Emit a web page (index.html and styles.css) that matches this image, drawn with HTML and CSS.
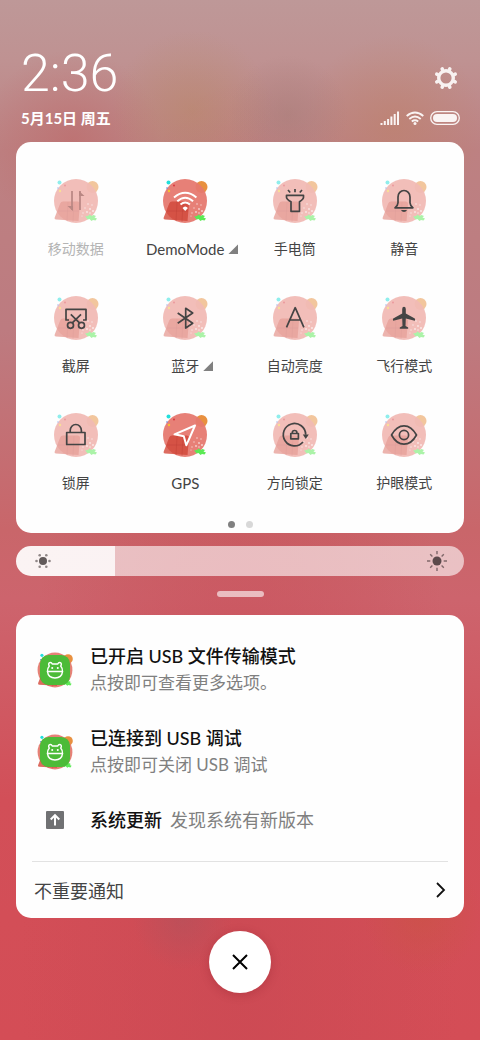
FILE: index.html
```html
<!DOCTYPE html>
<html lang="zh-CN">
<head>
    <meta charset="UTF-8">
    <meta name="viewport" content="width=device-width, initial-scale=1.0">
    <title>控制中心</title>
    <link rel="stylesheet" href="styles.css">
</head>
<body>
    <!-- shared shapes -->
    <svg class="defs" aria-hidden="true">
        <clipPath id="disc"><circle cx="24" cy="24" r="22"/></clipPath>
        <symbol id="blob" viewBox="0 0 48 48">
            <circle cx="40.500" cy="10" r="6" fill="#e8903f"/>
            <path d="M11 24.500h14.500q2.500 0 2.500 2.500l-1.500 17L4 42.500q-2 0-1.300-2l5.500-14q.8-2 2.800-2z" fill="#dc6c60"/>
            <circle cx="24" cy="24" r="22" fill="#e5786f" fill-opacity=".94"/>
            <g clip-path="url(#disc)">
                <path d="M11 24.500h14.500q2.500 0 2.500 2.500l-1.500 17L4 42.500q-2 0-1.300-2l5.500-14q.8-2 2.800-2z" fill="#d24b3e" fill-opacity=".85"/>
                <path d="M16 25l-1 20M22 25l-1 20M6 34h21" stroke="#b93d33" stroke-width=".7" stroke-opacity=".5" fill="none"/>
            </g>
            <circle cx="7.500" cy="5.500" r="2" fill="#22dfdb"/>
            <circle cx="6" cy="11" r=".8" fill="#5a7fe0"/>
            <circle cx="8" cy="14" r="1.200" fill="#f5c22f"/>
            <circle cx="13" cy="8.500" r=".9" fill="#d8303a"/>
            <g fill="#fff" fill-opacity=".65">
                <circle cx="36" cy="27" r=".8"/><circle cx="40" cy="28" r=".7"/><circle cx="33" cy="31" r=".7"/>
                <circle cx="38" cy="32" r=".9"/><circle cx="35" cy="35" r=".9"/><circle cx="31" cy="36" r=".7"/>
                <circle cx="41" cy="34" r="1"/><circle cx="38" cy="36" r=".8"/><circle cx="30" cy="39" r=".6"/>
            </g>
            <path d="M33 39.500l3-.5 1.500-1.500 2 1.500 2-1 2.500 1-1.500 1.500 2.500 1-1.500 2-2.500-.5-1.500 1-2-2-2 .5-1-1.500z" fill="#5bea55"/>
        </symbol>
        <symbol id="usb" viewBox="0 0 48 48">
            <use href="#blob"/>
            <rect x="5" y="5" width="38" height="38" rx="11" fill="#4cbb38"/>
            <g fill="none" stroke="#fff" stroke-width="1.800" stroke-linejoin="round" stroke-linecap="round">
                <path d="M14.500 26q0-4.500 2.300-7-1.800-3.200.4-4.200 2.300-.8 3.300 1.700h7q1-2.500 3.300-1.700 2.200 1 .4 4.200 2.300 2.500 2.300 7z"/>
                <path d="M14.500 26q1 8 9.500 8t9.500-8"/>
            </g>
            <circle cx="20.500" cy="21.500" r="1.300" fill="#fff"/>
            <circle cx="27.500" cy="21.500" r="1.300" fill="#fff"/>
        </symbol>
    </svg>

    <header class="status">
        <time class="clock">2:36</time>
        <button class="settings" type="button" aria-label="设置">
            <svg width="24" height="24" viewBox="0 0 24 24" fill="none" stroke="#f8f2f1">
                <circle cx="12" cy="12" r="7.300" stroke-width="3.400"/>
                <path d="M15.400 3.800l.4-1M20.200 8.600l1-.4M20.200 15.400l1 .4M15.400 20.200l.4 1M8.600 20.200l-.4 1M3.800 15.400l-1 .4M3.800 8.600l-1-.4M8.600 3.800l-.4-1" stroke-width="3.600" stroke-linecap="round"/>
            </svg>
        </button>
        <div class="date">5月15日 周五</div>
        <div class="indicators">
            <svg width="20" height="14" viewBox="0 0 20 14" fill="none" stroke="#faf4f3" stroke-width="2">
                <path d="M1.500 14v-2M4.800 14v-4M8.100 14V8M11.400 14V5.500M14.700 14V3M18 14V.5"/>
            </svg>
            <svg width="18" height="14" viewBox="0 0 18 14" fill="none" stroke="#faf4f3" stroke-width="1.900">
                <path d="M.7 5q8.300-7 16.600 0M3.300 8Q9 3.200 14.700 8M5.800 10.500q3.200-2.500 6.400 0"/>
                <circle cx="9" cy="12.400" r="1.500" fill="#faf4f3" stroke="none"/>
            </svg>
            <svg width="30" height="14" viewBox="0 0 30 14">
                <rect x=".7" y=".7" width="28.600" height="12.600" rx="6.300" fill="none" stroke="#faf4f3" stroke-width="1.300"/>
                <rect x="3" y="3" width="24" height="8" rx="4" fill="#faf4f3"/>
            </svg>
        </div>
    </header>

    <main>
        <section class="card toggles">
            <div class="grid">
                <button class="tile disabled" type="button">
                    <svg class="icon" viewBox="0 0 48 48">
                        <use class="blob" href="#blob"/>
                        <path class="line" d="M20 14v19M28 33V14"/>
                        <path class="solid" d="M15.500 29H21v5zM32.500 19H27v-5z"/>
                    </svg>
                    <span class="label">移动数据</span>
                </button>
                <button class="tile on" type="button">
                    <svg class="icon" viewBox="0 0 48 48">
                        <use class="blob" href="#blob"/>
                        <path class="line" d="M13 20.500q11.200-9.500 22.400 0M16.300 24.200q7.900-7 15.800 0M19.500 27.500q4.700-4 9.400 0"/>
                        <path class="solid" d="M21.500 31q2.700-3 5.400 0l-2.700 3z"/>
                    </svg>
                    <span class="label latin">DemoMode<i class="more"></i></span>
                </button>
                <button class="tile" type="button">
                    <svg class="icon" viewBox="0 0 48 48">
                        <use class="blob" href="#blob"/>
                        <path class="line" d="M15.500 18.300h17v2q0 2-4 4.500v9.500h-8.500v-9.500q-4.500-2.500-4.500-4.500zM24 12v3.300M17 13l2.200 2.500M31 13l-2.200 2.500"/>
                    </svg>
                    <span class="label">手电筒</span>
                </button>
                <button class="tile" type="button">
                    <svg class="icon" viewBox="0 0 48 48">
                        <use class="blob" href="#blob"/>
                        <path class="line" d="M15 30.800q3-2.500 3-5V20a6 6.500 0 0 1 12 0v5.800q0 2.500 3 5z"/>
                        <path class="solid" d="M21 33h6q-1 2-3 2t-3-2z"/>
                    </svg>
                    <span class="label">静音</span>
                </button>

                <button class="tile" type="button">
                    <svg class="icon" viewBox="0 0 48 48">
                        <use class="blob" href="#blob"/>
                        <path class="line" d="M17 26h-3V15.300h20V26h-3M20.300 28.800l8.700-8.500M27.500 28.800l-8.700-8.500"/>
                        <circle class="line" cx="18.500" cy="31.300" r="3"/>
                        <circle class="line" cx="29.500" cy="31.300" r="3"/>
                    </svg>
                    <span class="label">截屏</span>
                </button>
                <button class="tile" type="button">
                    <svg class="icon" viewBox="0 0 48 48">
                        <use class="blob" href="#blob"/>
                        <path class="line" d="M16.700 19l15 10.300-7 4.700V14.300l7 4.700-15 10.300"/>
                    </svg>
                    <span class="label">蓝牙<i class="more"></i></span>
                </button>
                <button class="tile" type="button">
                    <svg class="icon" viewBox="0 0 48 48">
                        <use class="blob" href="#blob"/>
                        <path class="line" d="M15.500 33.300l8.700-19.600 8.700 19.600M18.700 26h11"/>
                    </svg>
                    <span class="label">自动亮度</span>
                </button>
                <button class="tile" type="button">
                    <svg class="icon" viewBox="0 0 48 48">
                        <use class="blob" href="#blob"/>
                        <path class="solid" d="M24 12.700q1.700 0 1.800 2.300v4.500l9 5q.7.800 0 2.300l-9-2.300-.3 7.500 2.700 1.500v1.300h-8.400v-1.300l2.700-1.500-.3-7.500-9 2.300q-.7-1.500 0-2.300l9-5V15q.1-2.300 1.800-2.300z"/>
                    </svg>
                    <span class="label">飞行模式</span>
                </button>

                <button class="tile" type="button">
                    <svg class="icon" viewBox="0 0 48 48">
                        <use class="blob" href="#blob"/>
                        <path class="line" d="M14.700 21.500H33v12H14.700zM18.200 21.500v-2a5.600 6 0 0 1 11.200 0v2"/>
                    </svg>
                    <span class="label">锁屏</span>
                </button>
                <button class="tile on" type="button">
                    <svg class="icon" viewBox="0 0 48 48">
                        <use class="blob" href="#blob"/>
                        <path class="line" d="M34 14.500l-20.500 8.800 9.300 2 2.500 9z"/>
                    </svg>
                    <span class="label latin">GPS</span>
                </button>
                <button class="tile" type="button">
                    <svg class="icon" viewBox="0 0 48 48">
                        <use class="blob" href="#blob"/>
                        <path class="line" d="M32 31a11.200 11.200 0 1 1 2.700-7.200"/>
                        <path class="solid" d="M31.800 23.500h6l-3 4.500z"/>
                        <path class="line" d="M19.800 22.500h7.600v5.300h-7.600zM21.300 22.500v-.7a2.300 2.300 0 0 1 4.600 0v.7"/>
                    </svg>
                    <span class="label">方向锁定</span>
                </button>
                <button class="tile" type="button">
                    <svg class="icon" viewBox="0 0 48 48">
                        <use class="blob" href="#blob"/>
                        <path class="line" d="M11.500 24q5-9.200 12.500-9.200T36.500 24q-5 9.200-12.500 9.200T11.500 24z"/>
                        <circle class="line" cx="24" cy="24" r="4.600"/>
                    </svg>
                    <span class="label">护眼模式</span>
                </button>
            </div>
            <div class="pages"><i class="dot active"></i><i class="dot"></i></div>
        </section>

        <div class="brightness">
            <input type="range" min="0" max="100" value="22" aria-label="亮度">
            <svg class="sun low" width="22" height="22" viewBox="0 0 22 22" fill="#625a5a">
                <circle cx="11" cy="11" r="4"/>
                <g fill-opacity=".7">
                    <circle cx="4.500" cy="11" r="1.300"/><circle cx="17.500" cy="11" r="1.300"/>
                    <circle cx="7.700" cy="5.300" r="1.300"/><circle cx="14.300" cy="5.300" r="1.300"/>
                    <circle cx="7.700" cy="16.700" r="1.300"/><circle cx="14.300" cy="16.700" r="1.300"/>
                </g>
            </svg>
            <svg class="sun high" width="22" height="22" viewBox="0 0 22 22" fill="#5c4a4c">
                <circle cx="11" cy="11" r="4.500"/>
                <path d="M11 1v3.300M11 17.700V21M1 11h3.300M17.700 11H21M4.200 4.200l2.200 2.200M15.600 15.600l2.200 2.200M4.200 17.800l2.200-2.200M15.600 6.400l2.200-2.200" stroke="#5c4a4c" stroke-opacity=".75" stroke-width="1.400"/>
            </svg>
        </div>

        <button class="handle" type="button" aria-label="展开"></button>

        <section class="card notices">
            <article class="notice">
                <svg class="app" viewBox="0 0 48 48"><use href="#usb"/></svg>
                <div>
                    <h2>已开启 USB 文件传输模式</h2>
                    <p>点按即可查看更多选项。</p>
                </div>
            </article>
            <article class="notice">
                <svg class="app" viewBox="0 0 48 48"><use href="#usb"/></svg>
                <div>
                    <h2>已连接到 USB 调试</h2>
                    <p>点按即可关闭 USB 调试</p>
                </div>
            </article>
            <article class="notice compact">
                <svg class="update" width="18" height="18" viewBox="0 0 18 18">
                    <rect width="18" height="18" rx="1" fill="#707173"/>
                    <path d="M9 14.500V4.500M4.700 8.500L9 4.200l4.300 4.300" fill="none" stroke="#fff" stroke-width="2"/>
                </svg>
                <h2>系统更新</h2>
                <p>发现系统有新版本</p>
            </article>
            <button class="unimportant" type="button">
                <span>不重要通知</span>
                <svg width="10" height="16" viewBox="0 0 10 16" fill="none" stroke="#111" stroke-width="1.800">
                    <path d="M1 1l7 7-7 7"/>
                </svg>
            </button>
        </section>

        <button class="close" type="button" aria-label="清除">
            <svg width="16" height="16" viewBox="0 0 16 16" fill="none" stroke="#000" stroke-width="2">
                <path d="M1 1l14 14M15 1L1 15"/>
            </svg>
        </button>
    </main>
</body>
</html>
```
FILE: styles.css
```css
* {
    box-sizing: border-box;
}

body {
    margin: 0;
    padding: 44px 16px 24px;
    min-height: 100vh;
    font-family: Lato, "Noto Sans CJK SC", sans-serif;
    color: #444;
    background:
        radial-gradient(circle at 40% 110px, rgba(184, 136, 96, 0.45), transparent 80px),
        radial-gradient(circle at 60% 115px, rgba(165, 125, 120, 0.5), transparent 60px),
        radial-gradient(circle at 82% 125px, rgba(190, 128, 100, 0.5), transparent 90px),
        radial-gradient(circle at 15% 140px, rgba(190, 100, 100, 0.5), transparent 90px),
        radial-gradient(circle at 38% 920px, rgba(165, 85, 95, 0.4), transparent 50px),
        radial-gradient(circle at 88% 915px, rgba(200, 85, 65, 0.5), transparent 60px),
        radial-gradient(ellipse at 50% 940px, rgba(200, 72, 82, 0.6), transparent 220px),
        linear-gradient(#be9898 0, #bf9292 60px, #bd8182 150px, #bd7b80 330px, #c9666a 530px, #cd646d 600px, #d24f58 800px, #d44d56 1040px);
}

button {
    padding: 0;
    border: 0;
    background: none;
    font: inherit;
    color: inherit;
    cursor: pointer;
}

svg {
    display: block;
}

.defs {
    position: absolute;
    width: 0;
    height: 0;
}

/* status bar */

.status {
    display: grid;
    grid-template-columns: 1fr auto;
    align-items: center;
    row-gap: 2px;
    padding: 0 4px 12px 5px;
    color: #fff;
}

.clock {
    font-family: Roboto, sans-serif;
    font-size: 52px;
    font-weight: 300;
    line-height: 60px;
}

.settings {
    justify-self: end;
    margin: 8px 2px 0 0;
}

.date {
    font-size: 15px;
    font-weight: 700;
    line-height: 24px;
}

.indicators {
    display: flex;
    gap: 6px;
}

/* quick toggles */

.card {
    background: #fefefe;
    border-radius: 15px;
}

.toggles {
    padding: 35px 5px 5px;
}

.grid {
    display: grid;
    grid-template-columns: repeat(4, 1fr);
    row-gap: 33px;
}

.tile {
    display: flex;
    flex-direction: column;
    align-items: center;
    gap: 12px;
}

.icon {
    width: 48px;
    height: 48px;
    color: #444;
}

.blob {
    opacity: 0.5;
}

.line {
    fill: none;
    stroke: currentColor;
    stroke-width: 1.7;
    stroke-linejoin: round;
}

.solid {
    fill: currentColor;
}

.on .icon {
    color: #fff;
}

.on .blob {
    opacity: 1;
}

.on .line {
    stroke-width: 2;
}

.disabled .icon {
    color: #b98783;
}

.label {
    display: flex;
    align-items: center;
    font-size: 14px;
    line-height: 24px;
    white-space: nowrap;
}

.latin {
    font-size: 15px;
}

.disabled .label {
    color: #b4b4b4;
}

/* hangs outside so the label text stays centred */
.more {
    width: 10px;
    height: 10px;
    margin: 0 -14px 0 4px;
    background: #808080;
    clip-path: polygon(100% 0, 100% 100%, 0 100%);
}

.pages {
    display: flex;
    justify-content: center;
    gap: 11px;
    margin-top: 26px;
}

.dot {
    width: 7px;
    height: 7px;
    border-radius: 50%;
    background: #d8d8d8;
}

.dot.active {
    background: #808080;
}

/* brightness */

.brightness {
    position: relative;
    margin-top: 13px;
}

.brightness input {
    display: block;
    appearance: none;
    width: 100%;
    height: 30px;
    margin: 0;
    border-radius: 15px;
    background: linear-gradient(to right, rgba(255, 255, 255, 0.92) 22%, rgba(255, 255, 255, 0.6) 22%);
}

.brightness input::-webkit-slider-thumb {
    appearance: none;
    width: 1px;
    height: 30px;
}

.sun {
    position: absolute;
    top: 4px;
    pointer-events: none;
}

.low {
    left: 16px;
}

.high {
    right: 16px;
}

.handle {
    display: block;
    width: 47px;
    height: 6px;
    margin: 15px auto 18px;
    border-radius: 3px;
    background: rgba(255, 255, 255, 0.6);
}

/* notifications */

.notices {
    display: flex;
    flex-direction: column;
    gap: 28px;
    padding: 28px 16px 0;
}

.notice {
    display: flex;
    align-items: center;
    gap: 16px;
    padding-left: 4px;
}

.notice h2,
.notice p {
    margin: 0;
    font-weight: 400;
}

.notice h2 {
    font-size: 18px;
    font-weight: 500;
    line-height: 26px;
    color: #111;
}

.notice p {
    font-size: 17px;
    line-height: 28px;
    color: #808080;
}

.app {
    width: 38px;
    height: 38px;
}

.update {
    margin: 0 10px;
}

.compact {
    height: 26px;
}

.compact h2 {
    margin-right: -8px;
}

.compact p {
    font-size: 18px;
}

.unimportant {
    display: flex;
    align-items: center;
    justify-content: space-between;
    height: 57px;
    padding: 0 2px;
    border-top: 1px solid #e2e2e2;
    font-size: 18px;
}

.close {
    display: grid;
    place-items: center;
    width: 62px;
    height: 62px;
    margin: 13px auto 0;
    border-radius: 50%;
    background: #fff;
    box-shadow: 0 2px 10px rgba(120, 20, 30, 0.25);
}
```
